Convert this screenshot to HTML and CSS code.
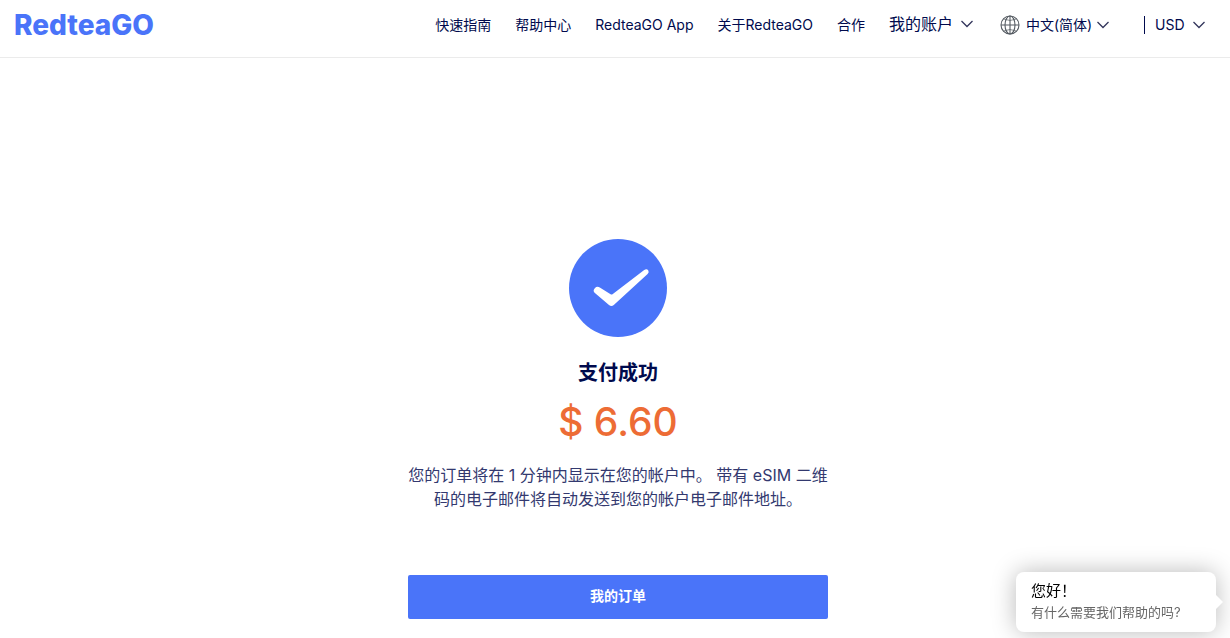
FILE: index.html
```html
<!DOCTYPE html>
<html lang="zh-CN">
<head>
    <meta charset="UTF-8">
    <meta name="viewport" content="width=device-width, initial-scale=1.0">
    <title>支付成功 - RedteaGO</title>
    <link rel="stylesheet" href="styles.css">
</head>
<body>
    <header class="header">
        <a class="logo" href="#">RedteaGO</a>
        <nav class="nav">
            <a href="#">快速指南</a>
            <a href="#">帮助中心</a>
            <a href="#">RedteaGO App</a>
            <a href="#">关于RedteaGO</a>
            <a href="#">合作</a>
            <button class="account" type="button" aria-haspopup="true">
                我的账户
                <svg class="chevron" viewBox="0 0 12 8"><path d="M0.5 1 L6 6.5 L11.5 1"/></svg>
            </button>
        </nav>
        <div class="picker language">
            <svg class="globe" viewBox="0 0 20 20">
                <circle cx="10" cy="10" r="9"/>
                <ellipse cx="10" cy="10" rx="5" ry="9"/>
                <path d="M10 1v18M1 10h18"/>
                <path d="M3.6 4 Q10 7 16.4 4M3.6 16 Q10 13 16.4 16" stroke-width="0.7"/>
            </svg>
            <select aria-label="语言">
                <option>中文(简体)</option>
            </select>
            <svg class="chevron" viewBox="0 0 12 8"><path d="M0.5 1 L6 6.5 L11.5 1"/></svg>
        </div>
        <div class="picker currency">
            <select aria-label="货币">
                <option>USD</option>
            </select>
            <svg class="chevron" viewBox="0 0 12 8"><path d="M0.5 1 L6 6.5 L11.5 1"/></svg>
        </div>
    </header>

    <main class="result">
        <svg class="result-icon" viewBox="0 0 98 98">
            <circle cx="49" cy="49" r="49" fill="#4a74f9"/>
            <path d="M25.8 49.2 Q28 46.8 30.8 48.6 L41.6 55.3 Q42.6 55.9 43.5 55.2 L75.2 31 Q77.8 29.4 79.3 31.4 Q80.4 33.2 78.6 35 L44.8 66 Q42.4 68 40 66 L25.6 53.8 Q23.6 51.6 25.8 49.2 Z" fill="#fff"/>
        </svg>
        <h1>支付成功</h1>
        <p class="price">$ 6.60</p>
        <p class="message">您的订单将在 1 分钟内显示在您的帐户中。 带有 eSIM 二维码的电子邮件将自动发送到您的帐户电子邮件地址。</p>
        <button class="btn-orders" type="button">我的订单</button>
    </main>

    <aside class="chat">
        <p class="chat-title">您好！</p>
        <p class="chat-text">有什么需要我们帮助的吗?</p>
    </aside>
</body>
</html>
```

FILE: styles.css
```css
* {
    margin: 0;
    padding: 0;
    box-sizing: border-box;
}

body {
    font-family: Inter, "Noto Sans CJK SC", sans-serif;
    font-size: 14px;
    color: #000a4d;
    background: #fff;
}

a {
    color: inherit;
    text-decoration: none;
}

button, select {
    font: inherit;
    color: inherit;
    background: none;
    border: none;
    cursor: pointer;
}

/* Header */
.header {
    display: flex;
    align-items: center;
    height: 58px;
    padding: 0 25px 8px 14px;
    border-bottom: 1px solid #ebebeb;
    white-space: nowrap;
}

.logo {
    font-size: 28px;
    font-weight: 800;
    color: #4a74f9;
    margin-right: auto;
}

.nav {
    display: flex;
    align-items: baseline;
    gap: 24px;
    line-height: 20px;
}

.account {
    display: flex;
    align-items: center;
    gap: 8px;
    font-size: 16px;
}

.chevron {
    width: 12px;
    height: 8px;
    fill: none;
    stroke: #33365c;
    stroke-width: 1.3;
    pointer-events: none;
}

.picker {
    display: flex;
    align-items: center;
}

.picker select {
    appearance: none;
    padding-right: 20px;
}

.picker .chevron {
    margin-left: -12px;
}

.language {
    margin: 0 35px 0 27px;
}

.language select {
    margin-left: 6px;
    padding-right: 16px;
}

.globe {
    width: 20px;
    height: 20px;
    fill: none;
    stroke: #555b62;
    stroke-width: 1.1;
}

.currency {
    border-left: 1px solid #000a4d;
    padding-left: 10px;
    height: 18px;
}

/* Payment result */
.result {
    display: flex;
    flex-direction: column;
    align-items: center;
    width: 100%;
    max-width: 426px;
    margin: 0 auto;
    padding: 181px 0 19px 6px;
    text-align: center;
}

.result-icon {
    width: 98px;
    height: 98px;
}

h1 {
    margin-top: 20px;
    font-size: 20px;
    font-weight: 700;
    line-height: 32px;
}

.price {
    margin-top: 9px;
    font-size: 39px;
    font-weight: 500;
    line-height: 48px;
    color: #ed6c35;
}

.message {
    margin-top: 17px;
    font-size: 16px;
    line-height: 24px;
    color: #33396f;
}

.btn-orders {
    width: 100%;
    height: 44px;
    margin-top: 64px;
    padding-bottom: 4px;
    border-radius: 2px;
    font-weight: 700;
    color: #fff;
    background: #4a74f9;
}

/* Chat bubble */
.chat {
    position: fixed;
    right: 14px;
    bottom: 6px;
    width: 200px;
    padding: 8px 15px 10px;
    border-radius: 8px;
    background: #fff;
    box-shadow: 0 0 24px rgba(0, 0, 0, 0.28);
}

.chat::after {
    content: "";
    position: absolute;
    top: 23px;
    right: -7px;
    border-left: 7px solid #fff;
    border-top: 7px solid transparent;
    border-bottom: 7px solid transparent;
}

.chat-title {
    font-size: 15px;
    line-height: 22px;
    color: #000;
}

.chat-text {
    font-size: 13px;
    line-height: 20px;
    color: #666;
}
```
